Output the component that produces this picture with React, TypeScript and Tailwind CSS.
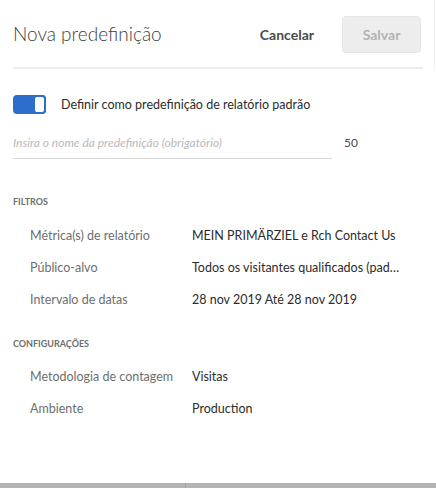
import { useState } from 'react';

const filtros = [
  { label: 'Métrica(s) de relatório', value: 'MEIN PRIMÄRZIEL e Rch Contact Us' },
  { label: 'Público-alvo', value: 'Todos os visitantes qualificados (padrão)' },
  { label: 'Intervalo de datas', value: '28 nov 2019 Até 28 nov 2019' },
];

const configuracoes = [
  { label: 'Metodologia de contagem', value: 'Visitas' },
  { label: 'Ambiente', value: 'Production' },
];

function Row({ label, value }: { label: string; value: string }) {
  return (
    <div className="flex h-[32px] items-center pl-[17px] text-[12.5px]">
      <div className="w-[162px] shrink-0 text-[#6e6e6e]">{label}</div>
      <div className="w-[208px] truncate text-[#2c2c2c]">{value}</div>
    </div>
  );
}

export default function App() {
  const [isDefault, setIsDefault] = useState(true);
  const [name, setName] = useState('');

  return (
    <div className="relative h-[488px] w-[436px] overflow-hidden bg-white font-['Lato',sans-serif]">
      <div className="absolute right-[1px] top-0 h-[70px] w-px bg-[#f0f0f0]" />
      <div className="px-[13px]">
        <div className="flex h-[69px] items-center border-b-2 border-[#ededed] pt-[2px]">
          <h1 className="flex-1 text-[19px] font-light text-[#3d3d3d]">Nova predefinição</h1>
          <button className="mr-[28px] text-[14px] font-bold text-[#4b4b4b]">Cancelar</button>
          <button className="mr-[2px] h-[37px] w-[79px] rounded-[4px] border border-[#e6e6e6] bg-[#ededed] text-[14px] font-bold text-[#b3b3b3]">
            Salvar
          </button>
        </div>

        <div className="mt-[25px] flex h-[20px] items-center">
          <button
            onClick={() => setIsDefault(!isDefault)}
            className="flex h-[19px] w-[33px] items-center rounded-[4px] bg-[#2d6dcc] p-0"
          >
            <span
              className={`h-[19px] w-[13px] rounded-[4px] border-2 border-[#2d6dcc] bg-white ${
                isDefault ? 'ml-auto' : ''
              }`}
            />
          </button>
          <span className="ml-[15px] pt-[2px] text-[12.5px] text-[#2c2c2c]">
            Definir como predefinição de relatório padrão
          </span>
        </div>

        <div className="mt-[13px] flex items-center">
          <input
            value={name}
            onChange={(e) => setName(e.target.value)}
            placeholder="Insira o nome da predefinição (obrigatório)"
            className="h-[32px] w-[319px] border-b border-[#d8d8d8] bg-transparent text-[12px] italic text-[#2c2c2c] outline-none placeholder:text-[#b9b9b9]"
          />
          <span className="ml-[12px] text-[12px] text-[#4b4b4b]">50</span>
        </div>

        <div className="mt-[36px] text-[9px] font-bold uppercase leading-[14px] text-[#6e6e6e]">Filtros</div>
        <div className="mt-[11px]">
          {filtros.map((f) => (
            <Row key={f.label} label={f.label} value={f.value} />
          ))}
        </div>

        <div className="mt-[21px] text-[9px] font-bold uppercase leading-[14px] text-[#6e6e6e]">Configurações</div>
        <div className="mt-[10px]">
          {configuracoes.map((c) => (
            <Row key={c.label} label={c.label} value={c.value} />
          ))}
        </div>
      </div>

      <div className="absolute bottom-0 left-0 flex h-[5px] w-full bg-[#b4b4b4]">
        <div className="ml-[185px] w-px bg-[#a3a3a3]" />
      </div>
    </div>
  );
}
